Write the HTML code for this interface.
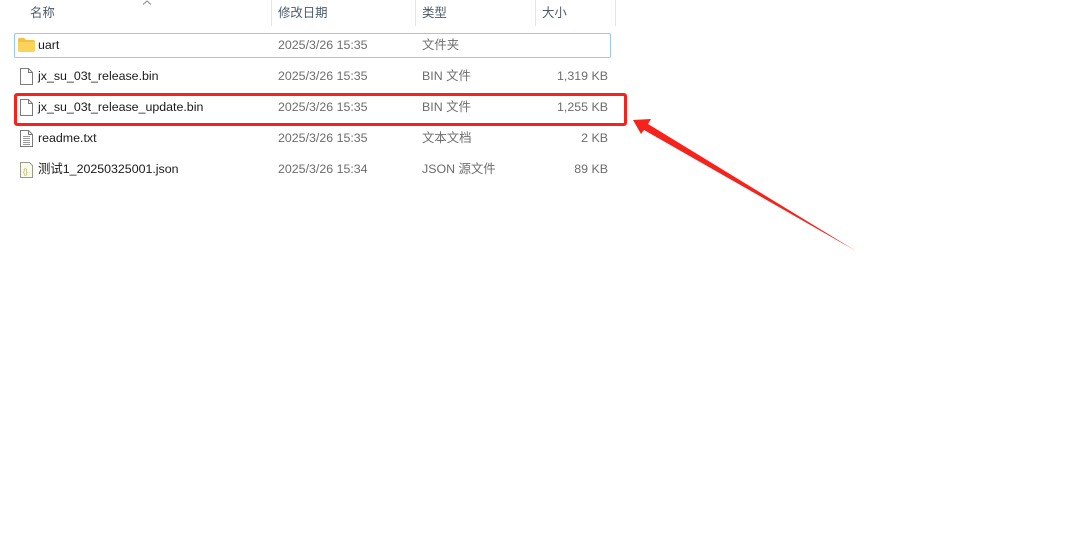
<!DOCTYPE html>
<html><head><meta charset="utf-8"><style>
body{margin:0;width:1067px;height:539px;background:#fff;position:relative;overflow:hidden;font-family:"Liberation Sans","Noto Sans CJK SC",sans-serif;font-size:12.4px}
.t{position:absolute;white-space:nowrap;line-height:15px}
.n{color:#1a1a1a}
.g{color:#6d6d6d}
.h{color:#4c5a6b}
.sep{position:absolute;top:0;width:1px;height:26px;background:#e5e5e5}
.r{text-align:right;width:80px}
</style></head><body>
<div class="t h" style="left:30px;top:6px">名称</div>
<svg style="position:absolute;left:142px;top:0" width="10" height="5"><path d="M1 4.5L5 1L9 4.5" stroke="#888" fill="none"/></svg>
<div class="sep" style="left:271px"></div>
<div class="t h" style="left:278px;top:6px">修改日期</div>
<div class="sep" style="left:415px"></div>
<div class="t h" style="left:422px;top:6px">类型</div>
<div class="sep" style="left:535px"></div>
<div class="t h" style="left:542px;top:6px">大小</div>
<div class="sep" style="left:615px"></div>

<div style="position:absolute;left:14px;top:33px;width:597px;height:25px;border:1px solid #99c9ef;box-sizing:border-box;border-radius:2px"></div>
<svg style="position:absolute;left:18px;top:38px" width="17" height="14"><path d="M0 2Q0 0 2 0H6L8 2H15Q17 2 17 4V12Q17 14 15 14H2Q0 14 0 12Z" fill="#f3c03f"/><path d="M0 4H17V12Q17 14 15 14H2Q0 14 0 12Z" fill="#fbd35a"/></svg>
<div class="t n" style="left:38px;top:38px">uart</div>
<div class="t g" style="left:278px;top:38px">2025/3/26 15:35</div>
<div class="t g" style="left:422px;top:38px">文件夹</div>

<svg style="position:absolute;left:20px;top:68px" width="13" height="17"><path d="M0.5 0.5H8.5L12.5 4.5V16.5H0.5Z M8.5 0.5V4.5H12.5" fill="#fff" stroke="#7a7a7a"/></svg>
<div class="t n" style="left:38px;top:69px">jx_su_03t_release.bin</div>
<div class="t g" style="left:278px;top:69px">2025/3/26 15:35</div>
<div class="t g" style="left:422px;top:69px">BIN 文件</div>
<div class="t g r" style="left:528px;top:69px">1,319 KB</div>

<svg style="position:absolute;left:20px;top:99px" width="13" height="17"><path d="M0.5 0.5H8.5L12.5 4.5V16.5H0.5Z M8.5 0.5V4.5H12.5" fill="#fff" stroke="#7a7a7a"/></svg>
<div class="t n" style="left:38px;top:100px">jx_su_03t_release_update.bin</div>
<div class="t g" style="left:278px;top:100px">2025/3/26 15:35</div>
<div class="t g" style="left:422px;top:100px">BIN 文件</div>
<div class="t g r" style="left:528px;top:100px">1,255 KB</div>
<div style="position:absolute;left:14px;top:93px;width:613px;height:33px;border:3px solid #f5231b;box-sizing:border-box;border-radius:3px"></div>

<svg style="position:absolute;left:20px;top:130px" width="13" height="17"><path d="M0.5 0.5H8.5L12.5 4.5V16.5H0.5Z M8.5 0.5V4.5H12.5" fill="#fff" stroke="#7a7a7a"/><path d="M3 6.5H10M3 8.5H10M3 10.5H10M3 12.5H10M3 14.5H10" stroke="#9a9a9a"/></svg>
<div class="t n" style="left:38px;top:131px">readme.txt</div>
<div class="t g" style="left:278px;top:131px">2025/3/26 15:35</div>
<div class="t g" style="left:422px;top:131px">文本文档</div>
<div class="t g r" style="left:528px;top:131px">2 KB</div>

<svg style="position:absolute;left:20px;top:162px" width="13" height="16"><path d="M0.5 0.5H9.5L12.5 3.5V15.5H0.5Z" fill="#fbfbf0" stroke="#9a9a8a"/><text x="3" y="12" font-size="7" fill="#b9a640" font-family="Liberation Sans">{}</text></svg>
<div class="t n" style="left:38px;top:162px">测试1_20250325001.json</div>
<div class="t g" style="left:278px;top:162px">2025/3/26 15:34</div>
<div class="t g" style="left:422px;top:162px">JSON 源文件</div>
<div class="t g r" style="left:528px;top:162px">89 KB</div>

<svg style="position:absolute;left:0;top:0" width="1067" height="539"><polygon points="633,120 651,119 648,124 856,251 644,130 641,134" fill="#f5231b"/></svg>
</body></html>
